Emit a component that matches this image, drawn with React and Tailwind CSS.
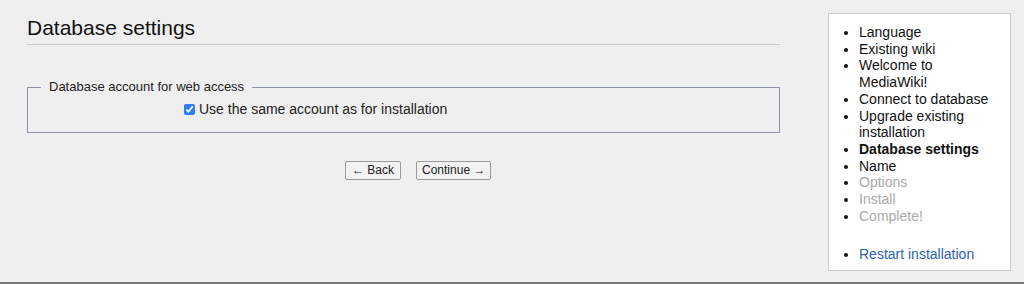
import React from "react";

export default function App() {
  const font = { fontFamily: '"Liberation Sans", Arial, sans-serif' };
  return (
    <div
      className="w-[1024px] h-[284px] bg-[#efefef] text-[#202122] flex flex-col overflow-hidden"
      style={font}
    >
      <div className="flex flex-1 min-h-0">
        {/* Main column */}
        <div className="w-[780px] pl-[27px] flex flex-col">
          <h2 className="mt-[14px] text-[21px] leading-[28px] pb-[2px] border-b border-[#c8ccd1] font-normal text-[#111]">
            Database settings
          </h2>

          <fieldset className="mt-[34px] border border-[#8b94a8] px-[13px] pt-[6px] pb-[14px]">
            <legend className="px-[8px] text-[13px] leading-[16px] text-[#222]">
              Database account for web access
            </legend>
            <label className="flex items-center pl-[143px] text-[14px] leading-[17px] text-[#222]">
              <input
                type="checkbox"
                defaultChecked
                className="m-0 mr-[4px] w-[11px] h-[11px] accent-[#2f7cf6]"
              />
              Use the same account as for installation
            </label>
          </fieldset>

          <div className="flex gap-[15px] mt-[28px] pl-[318px]">
            <button className="h-[19px] px-[6px] border border-[#9a9a9a] rounded-[2px] bg-[#f2f2f2] text-[12px] leading-[15px] text-[#222]">
              ← Back
            </button>
            <button className="h-[19px] px-[5px] border border-[#9a9a9a] rounded-[2px] bg-[#f2f2f2] text-[12px] leading-[15px] text-[#222]">
              Continue →
            </button>
          </div>
        </div>

        {/* Sidebar */}
        <div className="ml-[48px] mt-[13px] w-[183px] h-[258px] bg-white border border-[#c8ccd1] pl-[8px] pr-[14px] pt-[10px] text-[14px] leading-[16.7px] text-[#111]">
          <ul className="list-disc pl-[22px]">
            <li>Language</li>
            <li>Existing wiki</li>
            <li>Welcome to MediaWiki!</li>
            <li>Connect to database</li>
            <li>Upgrade existing installation</li>
            <li className="font-bold">Database settings</li>
            <li>Name</li>
            <li className="text-[#aaaaaa] marker:text-[#111]">Options</li>
            <li className="text-[#aaaaaa] marker:text-[#111]">Install</li>
            <li className="text-[#aaaaaa] marker:text-[#111]">Complete!</li>
          </ul>
          <ul className="list-disc pl-[22px] mt-[22px]">
            <li className="text-[#2f5fb3] marker:text-[#111]">Restart installation</li>
          </ul>
        </div>
      </div>
      <div className="h-[2px] bg-[#7a7a7a]" />
    </div>
  );
}
